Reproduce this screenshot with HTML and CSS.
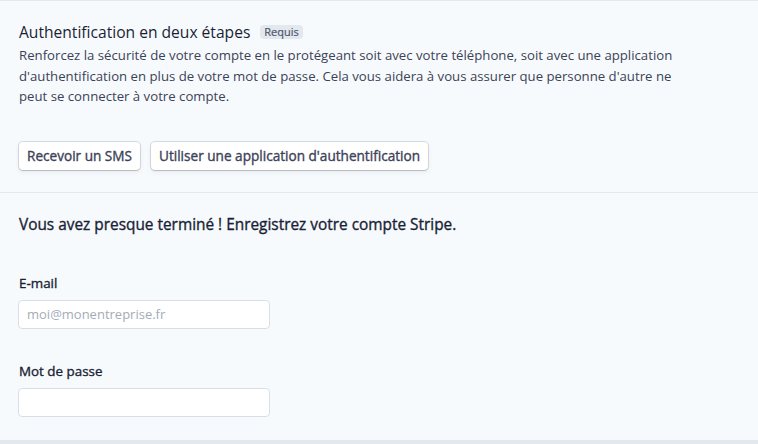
FILE: index.html
```html
<!DOCTYPE html>
<html lang="fr">
<head>
<meta charset="utf-8">
<link rel="stylesheet" href="styles.css">
</head>
<body>
<div class="page">
  <section class="twofa">
    <div class="title-row">
      <h2 class="title">Authentification en deux étapes</h2>
      <span class="badge">Requis</span>
    </div>
    <p class="desc">Renforcez la sécurité de votre compte en le protégeant soit avec votre téléphone, soit avec une application d'authentification en plus de votre mot de passe. Cela vous aidera à vous assurer que personne d'autre ne peut se connecter à votre compte.</p>
    <div class="buttons">
      <button class="btn">Recevoir un SMS</button>
      <button class="btn">Utiliser une application d'authentification</button>
    </div>
  </section>
  <section class="register">
    <h3 class="reg-title">Vous avez presque terminé ! Enregistrez votre compte Stripe.</h3>
    <div class="field">
      <label class="label" for="email">E-mail</label>
      <input class="input" id="email" type="text" placeholder="moi@monentreprise.fr">
    </div>
    <div class="field">
      <label class="label" for="pw">Mot de passe</label>
      <input class="input" id="pw" type="password">
    </div>
  </section>
</div>
</body>
</html>
```
FILE: styles.css
```css
html, body {
  margin: 0;
  padding: 0;
  background: #f7fafc;
}
body {
  font-family: "Open Sans", "Noto Sans", sans-serif;
  color: #3c4257;
  width: 758px;
  height: 444px;
  overflow: hidden;
}
.page {
  border-top: 1px solid #e3e8ee;
  border-bottom: 4px solid #e3e8ee;
  box-sizing: border-box;
  height: 444px;
}
.twofa {
  padding: 21px 18px 22px 19px;
  border-bottom: 1px solid #e3e8ee;
}
.title-row {
  display: flex;
  align-items: center;
  gap: 10px;
  height: 20px;
}
.title {
  margin: 0;
  font-size: 15.6px;
  font-weight: 400;
  line-height: 20px;
  color: #1a1f36;
}
.badge {
  display: inline-flex;
  align-items: center;
  height: 14px;
  padding: 0 4px;
  border-radius: 4px;
  background: #e3e8ee;
  color: #4f566b;
  font-size: 11px;
  line-height: 14px;
  font-weight: 400;
  -webkit-text-stroke: 0.2px currentColor;
}
.desc {
  margin: 3px 0 0;
  font-size: 13.2px;
  line-height: 20.5px;
  color: #3c4257;
  max-width: 680px;
}
.buttons {
  display: flex;
  gap: 11px;
  margin-top: 35px;
}
.btn {
  height: 28px;
  padding: 0 8px;
  border: 0;
  border-radius: 4px;
  background: #fff;
  font-family: inherit;
  font-size: 13.6px;
  font-weight: 400;
  -webkit-text-stroke: 0.35px currentColor;
  color: #3c4257;
  box-shadow: 0 0 0 1px rgba(60, 66, 87, 0.16), 0 2px 5px rgba(60, 66, 87, 0.08), 0 1px 1px rgba(0, 0, 0, 0.12);
}
.register {
  padding: 22px 18px 0 19px;
}
.reg-title {
  margin: 0 0 38px;
  font-size: 15.4px;
  font-weight: 400;
  -webkit-text-stroke: 0.35px currentColor;
  line-height: 20px;
  color: #1a1f36;
}
.field {
  display: flex;
  flex-direction: column;
  align-items: flex-start;
  margin-bottom: 32px;
}
.label {
  font-size: 13.4px;
  font-weight: 400;
  -webkit-text-stroke: 0.35px currentColor;
  line-height: 20px;
  color: #1a1f36;
  margin-bottom: 7px;
}
.input {
  width: 252px;
  height: 29px;
  box-sizing: border-box;
  margin-left: -1px;
  padding: 0 8px;
  border: 1px solid #dadfe7;
  border-radius: 4px;
  background: #fff;
  font-family: inherit;
  font-size: 13px;
  color: #3c4257;
  outline: none;
}
.input::placeholder {
  color: #a3acb9;
}
```
